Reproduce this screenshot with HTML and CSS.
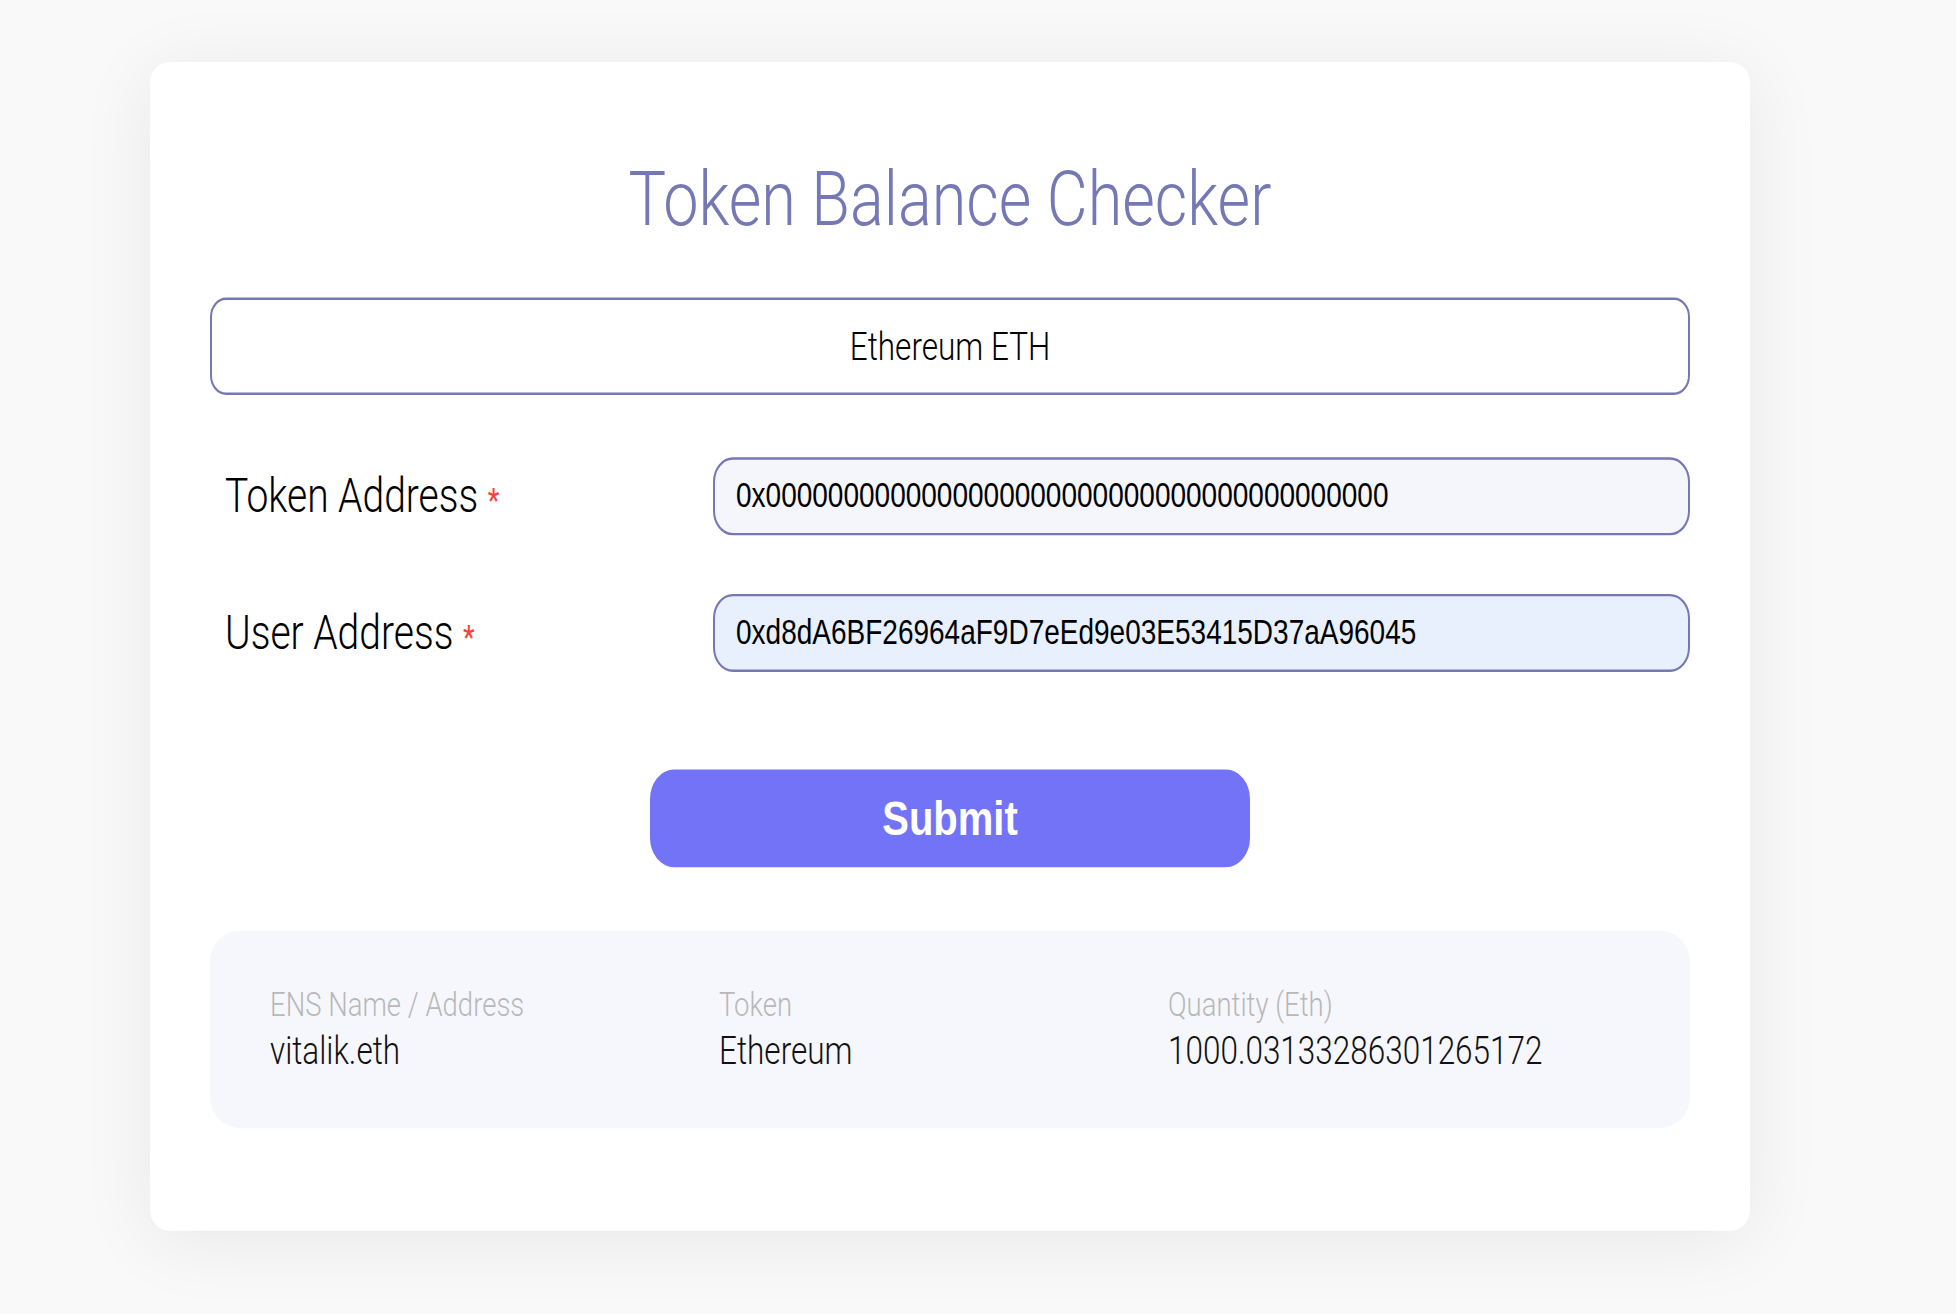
FILE: index.html
```html
<!DOCTYPE html>
<html lang="en">
<head>
<meta charset="utf-8">
<title>Token Balance Checker</title>
<link rel="stylesheet" href="styles.css">
</head>
<body>
<div class="page">
  <div class="card">
    <h1 class="title">Token Balance Checker</h1>
    <div class="select">Ethereum ETH</div>
    <div class="form-row row-token">
      <label class="label">Token Address <span class="req">*</span></label>
      <input class="field field-token" type="text" value="0x0000000000000000000000000000000000000000">
    </div>
    <div class="form-row row-user">
      <label class="label">User Address <span class="req">*</span></label>
      <input class="field field-user" type="text" value="0xd8dA6BF26964aF9D7eEd9e03E53415D37aA96045">
    </div>
    <button class="submit" type="button">Submit</button>
    <div class="result">
      <div class="result-col">
        <div class="result-head">ENS Name / Address</div>
        <div class="result-value">vitalik.eth</div>
      </div>
      <div class="result-col">
        <div class="result-head">Token</div>
        <div class="result-value">Ethereum</div>
      </div>
      <div class="result-col">
        <div class="result-head">Quantity (Eth)</div>
        <div class="result-value">1000.03133286301265172</div>
      </div>
    </div>
  </div>
</div>
</body>
</html>
```
FILE: styles.css
```css
html, body {
  margin: 0;
  padding: 0;
}
body {
  background: #f9f9f9;
  font-family: Roboto, "Liberation Sans", sans-serif;
  color: #111;
  min-height: 1314px;
  overflow: hidden;
}
.page {
  padding: 62px 0 0 150px;
}
.card {
  box-sizing: border-box;
  width: 1600px;
  height: 958px;
  padding: 76px 60px 0;
  background: #fff;
  border-radius: 20px / 17px;
  box-shadow: 0 8px 70px rgba(0, 0, 0, 0.07);
  transform: scaleY(1.22);
  transform-origin: top center;
}
.title {
  margin: 0;
  font-size: 63px;
  line-height: 73px;
  font-weight: 300;
  color: #7479b5;
  text-align: center;
}
.select {
  box-sizing: border-box;
  margin-top: 44px;
  height: 80px;
  border: 2px solid #7479b5;
  border-radius: 16px;
  display: flex;
  align-items: center;
  justify-content: center;
  font-size: 31.5px;
  font-weight: 300;
  color: #000;
}
.form-row {
  display: grid;
  grid-template-columns: 503px 1fr;
  align-items: center;
  height: 64px;
}
.row-token {
  margin-top: 51px;
}
.row-user {
  margin-top: 48px;
}
.label {
  padding-left: 15px;
  font-size: 39px;
  font-weight: 300;
  color: #000;
}
.req {
  font-size: 27px;
  color: #f44336;
  font-weight: 400;
}
.field {
  box-sizing: border-box;
  height: 64px;
  width: 100%;
  margin: 0;
  padding: 0 21px;
  border: 2px solid #7479b5;
  border-radius: 20px;
  font-family: "Liberation Sans", Arial, sans-serif;
  font-size: 28px;
  color: #000;
  outline: none;
}
.field-token {
  background: #f5f6fc;
}
.field-user {
  background: #e8f0fe;
}
.submit {
  display: block;
  box-sizing: border-box;
  margin: 80px auto 0;
  width: 600px;
  height: 80px;
  border: none;
  border-radius: 24px;
  background: #7373f7;
  color: #fff;
  font-family: "Liberation Sans", Arial, sans-serif;
  font-weight: 700;
  font-size: 40px;
  cursor: pointer;
}
.result {
  box-sizing: border-box;
  margin-top: 52px;
  height: 162px;
  padding: 45px 60px;
  background: #f6f7fc;
  border-radius: 30px / 26px;
  display: grid;
  grid-template-columns: 449px 449px 1fr;
}
.result-head {
  font-size: 27.5px;
  line-height: 32px;
  font-weight: 300;
  color: #b8b8b8;
}
.result-value {
  margin-top: 3px;
  font-size: 31.5px;
  line-height: 37px;
  font-weight: 300;
  color: #111;
}
```
